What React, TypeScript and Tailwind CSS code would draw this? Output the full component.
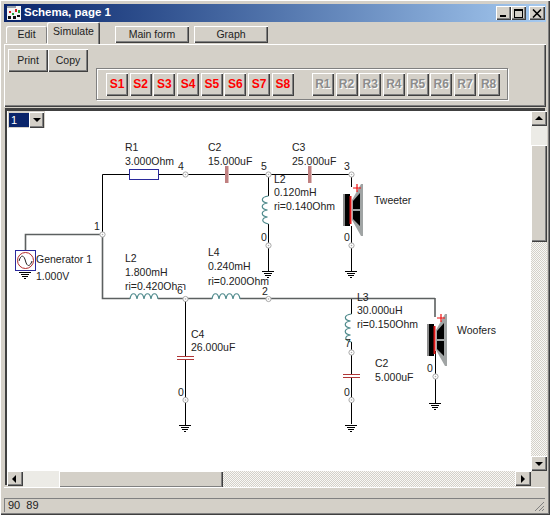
const raised =
  'bg-[#d4d0c8] shadow-[inset_1px_1px_0_#fff,inset_-1px_-1px_0_#404040,inset_-2px_-2px_0_#808080]';

const sButtons = ['S1', 'S2', 'S3', 'S4', 'S5', 'S6', 'S7', 'S8'];
const rButtons = ['R1', 'R2', 'R3', 'R4', 'R5', 'R6', 'R7', 'R8'];

const wire = '#000000';
const wireGrey = '#5c6060';
const teal = '#4f8a8c';

function Node({ x, y }: { x: number; y: number }) {
  return (
    <g>
      <circle cx={x} cy={y} r={2.6} fill="#fff" stroke="#a8a8a8" strokeWidth={1} />
      <circle cx={x} cy={y} r={0.8} fill="#b0b0b0" />
    </g>
  );
}

function Ground({ x, y }: { x: number; y: number }) {
  return (
    <g stroke="#000" strokeWidth={1}>
      <path d={`M${x - 6} ${y + 0.5}H${x + 6}M${x - 4} ${y + 2.5}H${x + 4}M${x - 3} ${y + 4.5}H${x + 3}M${x - 1} ${y + 6.5}H${x + 1}`} />
    </g>
  );
}

function Label({ x, y, children }: { x: number; y: number; children: string }) {
  return (
    <text x={x} y={y} fontSize={10.5} fill="#222" fontFamily="'Liberation Sans', Arial, sans-serif">
      {children}
    </text>
  );
}

function HCoil({ x, y }: { x: number; y: number }) {
  return (
    <path
      d={`M${x} ${y}c1 -7 6 -7 7 0c1 -7 6 -7 7 0c1 -7 6 -7 7 0c1 -7 6 -7 7 0`}
      fill="none"
      stroke={teal}
      strokeWidth={1.2}
    />
  );
}

function VCoil({ x, y }: { x: number; y: number }) {
  return (
    <path
      d={`M${x} ${y}c-8 1 -8 6 -1 7c-7 1 -7 6 0 7c-7 1 -7 6 0 7c-6 1 -7 5 1 7`}
      fill="none"
      stroke={teal}
      strokeWidth={1.2}
    />
  );
}

function Speaker({ x, y }: { x: number; y: number }) {
  return (
    <g transform={`translate(${x} ${y})`}>
      <rect x={-8} y={10} width={7} height={32} fill="#8c8c8c" />
      <rect x={-6} y={10} width={5} height={32} fill="#000" />
      <rect x={-1.5} y={12} width={2} height={28} fill="#e01818" />
      <path d="M10 0h2v52h-2l-9 -16v-20z" fill="#a0a4a4" />
      <path d="M2 17l7 -8v16h-7zM2 27h7v15l-7 -7z" fill="#000" />
      <path d="M3 2h8M7 -2v8" stroke="#f01010" strokeWidth={1.2} fill="none" transform="translate(-1 2)" />
    </g>
  );
}

function Schematic() {
  return (
    <svg width={522} height={357} viewBox="7 110 522 357" className="block">
      <path
        d="M102.5 233V173.5H129M159 173.5H225M229 173.5H308M312 173.5H351.5M268.5 173.5V195M268.5 223V270M351.5 173.5V186M351.5 225V270M185.5 298V355M185.5 359V424M351.5 298V313M351.5 341V373M351.5 377V423M435.5 350V402"
        fill="none"
        stroke={wire}
        strokeWidth={1}
      />
      <path d="M25.5 249V233.5H102.5M102.5 233V297.5H130M158 297.5H212M240 297.5H435M435 297V316" fill="none" stroke={wireGrey} strokeWidth={1.6} />

      {/* generator */}
      <rect x={15.5} y={249.5} width={20} height={20} fill="#fff" stroke="#2a2a9c" strokeWidth={1} />
      <circle cx={25.5} cy={259.5} r={8} fill="none" stroke="#b02a2a" strokeWidth={1} />
      <path d="M19 260c2 -7 5 -6 6.500 0s4.500 6 6.500 0" fill="none" stroke="#222" strokeWidth={1} />
      <Ground x={25} y={271} />

      {/* R1 */}
      <rect x={129.5} y={168.5} width={29} height={10} fill="#fff" stroke="#2a2a9c" strokeWidth={1} />

      {/* capacitors */}
      <rect x={225} y={165} width={3.500} height={17} fill="#c08080" />
      <rect x={308} y={165} width={3.500} height={17} fill="#c08080" />
      <path d="M177 355.500H194M177 358.500H194M343 373.500H360M343 376.500H360" stroke="#b03838" strokeWidth={1.2} fill="none" />

      {/* inductors */}
      <HCoil x={130} y={298} />
      <HCoil x={212} y={298} />
      <VCoil x={268.5} y={195} />
      <VCoil x={351.5} y={313} />

      <Speaker x={351} y={183} />
      <Speaker x={435} y={313} />

      <Ground x={268} y={270} />
      <Ground x={351} y={270} />
      <Ground x={435} y={402} />
      <Ground x={185} y={424} />
      <Ground x={351} y={424} />

      <Label x={36} y={262}>Generator 1</Label>
      <Label x={36} y={279}>1.000V</Label>
      <Label x={125} y={150}>R1</Label>
      <Label x={125} y={164}>3.000Ohm</Label>
      <Label x={208} y={150}>C2</Label>
      <Label x={208} y={164}>15.000uF</Label>
      <Label x={292} y={150}>C3</Label>
      <Label x={292} y={164}>25.000uF</Label>
      <Label x={274} y={182}>L2</Label>
      <Label x={274} y={195}>0.120mH</Label>
      <Label x={274} y={209}>ri=0.140Ohm</Label>
      <Label x={374} y={203}>Tweeter</Label>
      <Label x={125} y={261}>L2</Label>
      <Label x={125} y={275}>1.800mH</Label>
      <Label x={125} y={289}>ri=0.420Ohm</Label>
      <Label x={208} y={255}>L4</Label>
      <Label x={208} y={269}>0.240mH</Label>
      <Label x={208} y={284}>ri=0.200Ohm</Label>
      <Label x={357} y={300}>L3</Label>
      <Label x={357} y={313}>30.000uH</Label>
      <Label x={357} y={327}>ri=0.150Ohm</Label>
      <Label x={457} y={333}>Woofers</Label>
      <Label x={191} y={337}>C4</Label>
      <Label x={191} y={350}>26.000uF</Label>
      <Label x={375} y={366}>C2</Label>
      <Label x={375} y={380}>5.000uF</Label>

      <rect x={177} y={284} width={7} height={10} fill="#fff" />
      <Label x={177} y={293}>6</Label>
      <Label x={94} y={229}>1</Label>
      <Label x={178} y={169}>4</Label>
      <Label x={261} y={169}>5</Label>
      <Label x={344} y={169}>3</Label>
      <Label x={261} y={240}>0</Label>
      <Label x={344} y={240}>0</Label>
      <Label x={262} y={294}>2</Label>
      <Label x={345} y={346}>7</Label>
      <Label x={178} y={395}>0</Label>
      <Label x={344} y={395}>0</Label>
      <Label x={427} y={371}>0</Label>

      <Node x={102.5} y={233.5} />
      <Node x={185.5} y={173.5} />
      <Node x={268.5} y={173.5} />
      <Node x={351.5} y={173.5} />
      <Node x={268.5} y={244.5} />
      <Node x={351.5} y={244.5} />
      <Node x={185.5} y={298} />
      <Node x={268.5} y={298} />
      <Node x={351.5} y={351.5} />
      <Node x={185.5} y={399} />
      <Node x={351.5} y={399} />
      <Node x={435.5} y={375.5} />
    </svg>
  );
}

function Arrow({ dir }: { dir: 'up' | 'down' | 'left' | 'right' }) {
  const d = {
    up: 'M1 6L5 2L9 6Z',
    down: 'M1 3L9 3L5 7Z',
    left: 'M6 1V9L2 5Z',
    right: 'M3 1V9L7 5Z',
  }[dir];
  return (
    <svg width={10} height={10} viewBox="0 0 10 10">
      <path d={d} fill="#000" />
    </svg>
  );
}

function ScrollButton({ dir }: { dir: 'up' | 'down' | 'left' | 'right' }) {
  return (
    <div className={`${raised} flex h-[15px] w-4 shrink-0 items-center justify-center`}>
      <Arrow dir={dir} />
    </div>
  );
}

const dither =
  'bg-[repeating-conic-gradient(#d4d0c8_0%_25%,#f8f8f6_0%_50%)] bg-[length:2px_2px]';

export default function App() {
  return (
    <div className="flex h-[515px] w-[550px] flex-col overflow-hidden bg-[#d4d0c8] px-[4px] pt-[4px] font-['Liberation_Sans',Arial,sans-serif] text-[10.5px] text-[#222] shadow-[inset_1px_1px_0_#fff,inset_-1px_-1px_0_#404040,inset_-2px_-2px_0_#808080]">
      {/* title bar */}
      <div className="flex h-[18px] shrink-0 items-center bg-gradient-to-r from-[#0a246a] to-[#a6caf0] pl-[2px] pr-[1px]">
        <svg width={16} height={16} viewBox="0 0 16 16" className="shrink-0">
          <rect x={1} y={1} width={14} height={14} fill="#f4f4f4" />
          <rect x={1} y={1} width={9} height={2} fill="#9aa0a8" />
          <path d="M3 6h2v2h-2zM9 4h2v3h-2z" fill="#d02020" />
          <path d="M12 5h2v3h-2zM6 8h2v2h-2z" fill="#20a030" />
          <path d="M2 11h3v3h-3zM7 11h3v3h-3zM11 10h3v2h-3z" fill="#111" />
        </svg>
        <span className="ml-[2px] text-[11.500px] font-bold text-white">Schema, page 1</span>
        <div className="ml-auto flex items-center">
          <div className={`${raised} flex h-[14px] w-[15px] items-end justify-start pb-[3px] pl-[4px]`}>
            <div className="h-[2px] w-[6px] bg-black" />
          </div>
          <div className={`${raised} flex h-[14px] w-[15px] items-center justify-center`}>
            <div className="h-[9px] w-[9px] border border-t-2 border-black" />
          </div>
          <div className={`${raised} ml-[3px] flex h-[14px] w-[16px] items-center justify-center`}>
            <svg width={10} height={9} viewBox="0 0 10 9">
              <path d="M1 0.500L9 8.500M9 0.500L1 8.500" stroke="#000" strokeWidth={1.6} />
            </svg>
          </div>
        </div>
      </div>

      {/* tab row */}
      <div className="relative z-10 flex h-[22px] shrink-0 items-end pl-[2px]">
        <div className="mb-[1px] flex h-[17px] w-[41px] items-center justify-center rounded-t-[2px] bg-[#d4d0c8] shadow-[inset_1px_1px_0_#fff,inset_-1px_0_0_#808080]">
          Edit
        </div>
        <div className="flex h-[22px] w-[53px] items-center justify-center rounded-t-[2px] bg-[#d4d0c8] pb-[2px] shadow-[inset_1px_1px_0_#fff,inset_-1px_0_0_#404040,inset_-2px_0_0_#808080]">
          Simulate
        </div>
        <div className={`${raised} mb-[1px] ml-[15px] flex h-[17px] w-[74px] items-center justify-center`}>Main form</div>
        <div className={`${raised} mb-[1px] ml-[5px] flex h-[17px] w-[74px] items-center justify-center`}>Graph</div>
      </div>

      {/* toolbar page */}
      <div className="flex h-[63px] shrink-0 items-start pl-[4px] pt-[5px] shadow-[inset_1px_1px_0_#fff,inset_-1px_-1px_0_#404040,inset_-2px_-2px_0_#808080]">
        <div className={`${raised} flex h-[23px] w-[40px] items-center justify-center`}>Print</div>
        <div className={`${raised} flex h-[23px] w-[40px] items-center justify-center`}>Copy</div>
        <div className="ml-[8px] mt-[19px] flex h-[32px] w-[412px] items-center border border-[#808080] pl-[9px] shadow-[inset_1px_1px_0_#fff,1px_1px_0_#fff]">
          <div className="flex gap-[1.700px]">
            {sButtons.map((b) => (
              <div key={b} className={`${raised} flex h-[23px] w-[22px] items-center justify-center text-[12px] font-bold text-[#ff0000]`}>
                {b}
              </div>
            ))}
          </div>
          <div className="ml-[18px] flex gap-[1.700px]">
            {rButtons.map((b) => (
              <div key={b} className={`${raised} flex h-[23px] w-[22px] items-center justify-center text-[12px] font-bold text-[#8c8c8c] [text-shadow:1px_1px_0_#fff]`}>
                {b}
              </div>
            ))}
          </div>
        </div>
      </div>

      {/* drawing area */}
      <div className="ml-[1px] mt-[1px] grid h-[377px] w-[540px] shrink-0 grid-cols-[524px_16px] grid-rows-[360px_17px] border-l-2 border-t-[3px] border-[#404040]">
        <div className="relative overflow-hidden bg-white">
          <div className="absolute left-[1px] top-0 flex h-[17px] w-[37px] items-center bg-[#d4d0c8]">
            <div className="ml-[1px] h-[14px] w-[20px] bg-[#0a246a] pl-[2px] text-[11px] leading-[14px] text-white">1</div>
            <div className={`${raised} flex h-[16px] w-[15px] items-center justify-center`}>
              <Arrow dir="down" />
            </div>
          </div>
          <Schematic />
        </div>

        <div className="flex flex-col">
          <ScrollButton dir="up" />
          <div className="h-[19px] shrink-0 bg-[#ecebe6]" />
          <div className={`${raised} h-[97px] w-4 shrink-0`} />
          <div className={`${dither} min-h-0 flex-1`} />
          <ScrollButton dir="down" />
        </div>

        <div className="flex items-stretch">
          <ScrollButton dir="left" />
          <div className="w-[36px] shrink-0 bg-[#ecebe6]" />
          <div className={`${raised} w-[164px] shrink-0`} />
          <div className={`${dither} min-w-0 flex-1`} />
          <ScrollButton dir="right" />
        </div>
        <div className="bg-[#d4d0c8]" />
      </div>

      {/* status bar */}
      <div className="mt-[2px] h-px w-[541px] shrink-0 bg-white" />
      <div className="relative mt-[10px] flex h-[14px] w-[541px] shrink-0 items-center border-l border-t border-[#808080] pl-[3px] text-[11px]">
        90&nbsp;&nbsp;89
        <svg width={12} height={12} viewBox="0 0 12 12" className="absolute bottom-0 right-0">
          <path d="M11 2L2 11M11 6L6 11M11 9L9 11" stroke="#808080" strokeWidth={1} />
        </svg>
      </div>
    </div>
  );
}
